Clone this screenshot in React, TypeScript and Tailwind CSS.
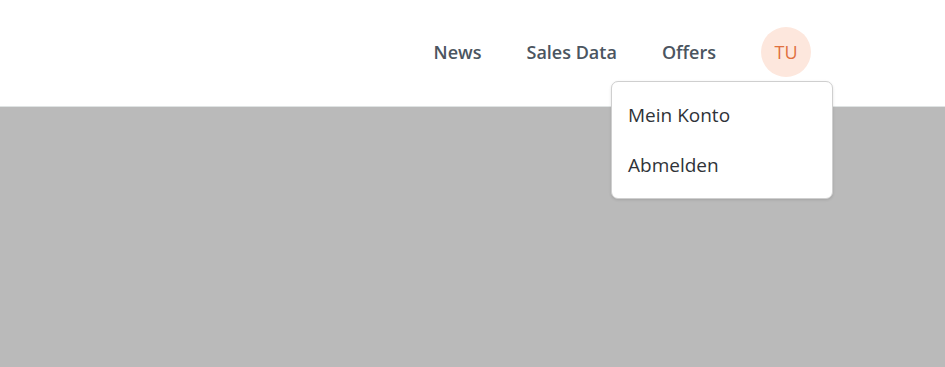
import React from "react";

export default function App() {
  return (
    <div className="w-[945px] h-[367px] flex flex-col bg-[#bababa]" style={{ fontFamily: '"Open Sans", "Noto Sans", sans-serif' }}>
      <header className="h-[107px] shrink-0 bg-white border-b border-[#dfe3e3] flex items-center justify-end pr-[134px] pb-[2px]">
        <nav className="flex items-center gap-[45px] text-[18px] font-semibold text-[#4b5560]">
          <a className="cursor-pointer">News</a>
          <a className="cursor-pointer">Sales Data</a>
          <a className="cursor-pointer">Offers</a>
          <div className="relative">
            <div className="w-[50px] h-[50px] rounded-full bg-[#fde7dd] flex items-center justify-center text-[18px] font-normal text-[#e0713f]">
              TU
            </div>
            <div className="absolute top-full mt-[4px] right-[-22px] w-[222px] bg-white border border-[#cfcfcf] rounded-[7px] shadow-[0_1px_3px_rgba(0,0,0,0.12)] py-[8px] font-normal text-[19px] text-[#2f3338]">
              <div className="h-[50px] flex items-center px-[16px] whitespace-nowrap">Mein Konto</div>
              <div className="h-[50px] flex items-center px-[16px] whitespace-nowrap">Abmelden</div>
            </div>
          </div>
        </nav>
      </header>
      <main className="flex-1" />
    </div>
  );
}
